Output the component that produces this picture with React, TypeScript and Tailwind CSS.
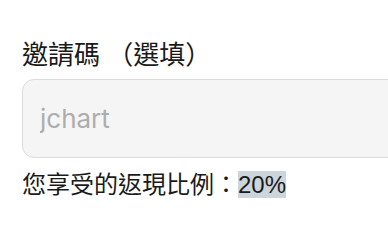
const App = () => {
  return (
    <div
      lang="zh-TW"
      className="w-[388px] h-[248px] overflow-hidden bg-white font-['Liberation_Sans','Noto_Sans_CJK_TC',sans-serif] text-[#1a1a1a]"
    >
      <div className="pl-[22px] pt-[37px]">
        <label className="block text-[26px] leading-[36px]">邀請碼 （選填）</label>
        <input
          className="mt-[6px] block w-[420px] h-[79px] rounded-[12px] border border-[#dcdcdc] bg-[#f5f5f5] pl-[17px] font-['Inter',sans-serif] text-[26px] outline-none placeholder:text-[#adadad]"
          placeholder="jchart"
        />
        <p className="mt-[11px] text-[24px] leading-[32px]">
          您享受的返現比例：<span className="bg-[#ccd5dc]">20%</span>
        </p>
      </div>
    </div>
  );
};

export default App;
